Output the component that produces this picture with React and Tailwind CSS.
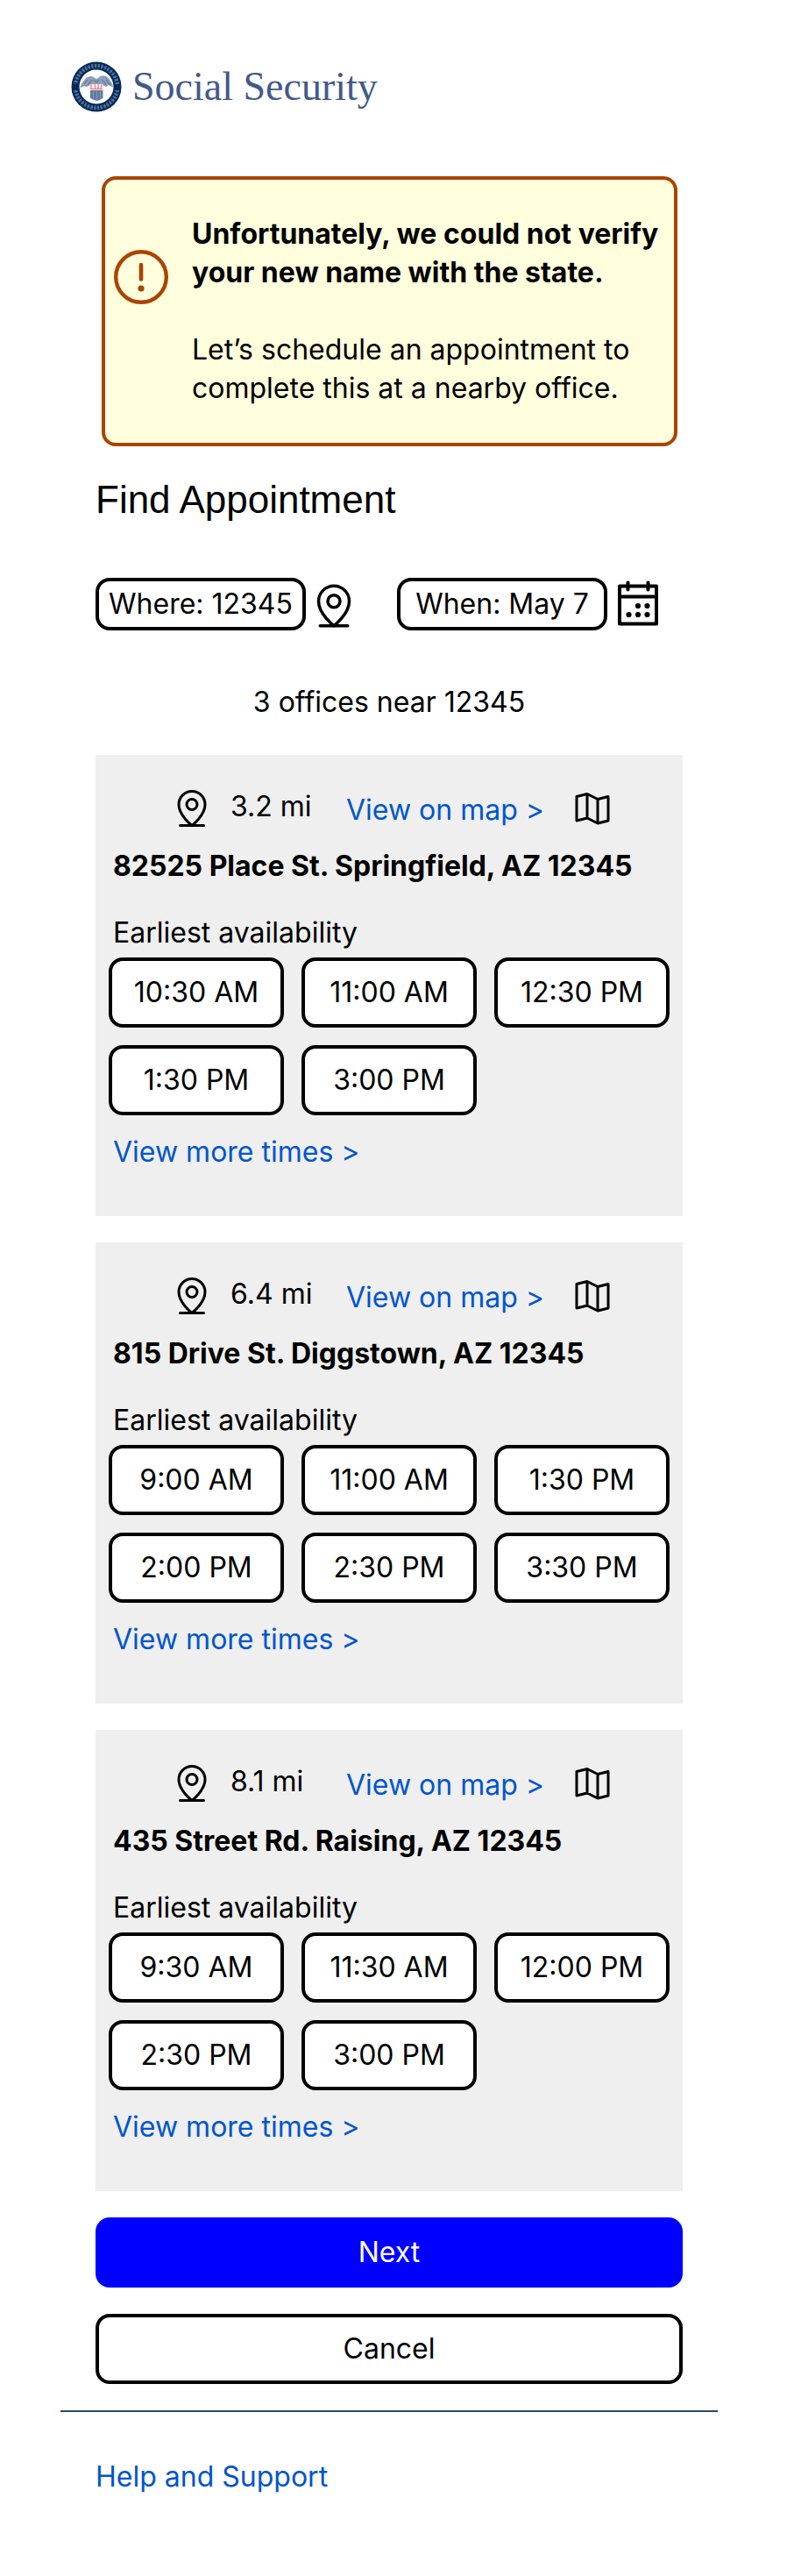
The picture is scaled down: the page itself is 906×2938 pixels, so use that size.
const offices = [
  {
    distance: "3.2 mi",
    address: "82525 Place St. Springfield, AZ 12345",
    times: ["10:30 AM", "11:00 AM", "12:30 PM", "1:30 PM", "3:00 PM"],
  },
  {
    distance: "6.4 mi",
    address: "815 Drive St. Diggstown, AZ 12345",
    times: ["9:00 AM", "11:00 AM", "1:30 PM", "2:00 PM", "2:30 PM", "3:30 PM"],
  },
  {
    distance: "8.1 mi",
    address: "435 Street Rd. Raising, AZ 12345",
    times: ["9:30 AM", "11:30 AM", "12:00 PM", "2:30 PM", "3:00 PM"],
  },
];

function Seal() {
  return (
    <svg viewBox="0 0 58 58" className="size-[58px] shrink-0" aria-hidden="true">
      <circle cx="29" cy="29" r="28.5" fill="#03295a" />
      <circle cx="29" cy="29" r="24" fill="none" stroke="#4f6f94" strokeWidth="4.5" strokeDasharray="2.4 1.4" />
      <path d="M5 26v7M53 26v7" stroke="#03295a" strokeWidth="6" />
      <circle cx="29" cy="29" r="19.5" fill="#fff" />
      <path
        d="M10.500 30.500c1-6 4-8 6-11 3-3 8-3.500 10-1l2.500 1.500 2.500-1.500c3-3 8-3 11 0 2 3 5 6 5.500 11l-5-2.500-3 2-4-2-4 1-3-2-3 2-4-1-4 2-3-1z"
        fill="#8b9fb8"
      />
      <path d="M15 26l4-5M19 27l5-6M36 21l4 6M40 21l5 6M26 21l3 3 3-3" stroke="#5f7d9f" strokeWidth="1.2" fill="none" />
      <path d="M21.500 26h15v7h-15z" fill="#fff" />
      <path d="M23 26v6M27 26l1 6M31 26v6M35 26l-1 6M22 31.500h14" stroke="#ee7a8c" strokeWidth="1.4" fill="none" />
      <path d="M22 33h14.500v9c-2 1-4 2-7 3-3-1-6-2-7.500-3z" fill="#5f7d9f" />
      <path d="M25.500 34v8M29.500 34v10M33.500 34v8" stroke="#8199b4" strokeWidth="1" />
    </svg>
  );
}

function AlertIcon() {
  return (
    <svg viewBox="0 0 62 62" className="size-[62px] shrink-0" fill="none" aria-hidden="true">
      <circle cx="31" cy="31" r="28.8" stroke="#aa4400" strokeWidth="4.4" />
      <path d="M31 17v16.5" stroke="#aa4400" strokeWidth="4.6" strokeLinecap="round" />
      <circle cx="31" cy="44" r="3.6" fill="#aa4400" />
    </svg>
  );
}

function PinIcon({ className }) {
  return (
    <svg viewBox="0 0 48 48" className={className} fill="none" stroke="#000" strokeWidth="3" strokeLinecap="round" strokeLinejoin="round" aria-hidden="true">
      <path d="M39 19.5C39 32 24 43.5 24 43.5S9 32 9 19.5a15 15 0 0 1 30 0z" />
      <circle cx="24" cy="19.5" r="6" />
      <path d="M10.500 43.500h27" />
    </svg>
  );
}

function CalendarIcon() {
  return (
    <svg viewBox="0 0 48 52" className="h-[52px] w-12 shrink-0" fill="none" stroke="#000" strokeWidth="4" strokeLinecap="round" strokeLinejoin="round" aria-hidden="true">
      <path d="M3 6.500h42v43H3zM3 18.500h42M12.500 2.500v8M35.500 2.500v8" />
      <g fill="#000" stroke="none">
        <circle cx="24" cy="29" r="3.100" />
        <circle cx="34.500" cy="29" r="3.100" />
        <circle cx="13.500" cy="39" r="3.100" />
        <circle cx="24" cy="39" r="3.100" />
        <circle cx="34.500" cy="39" r="3.100" />
      </g>
    </svg>
  );
}

function MapIcon() {
  return (
    <svg viewBox="0 0 48 48" className="size-12 shrink-0" fill="none" stroke="#000" strokeWidth="3" strokeLinejoin="round" aria-hidden="true">
      <path d="M6 10.500 18 7.500 30 13.500 42 10.500V38L30 41 18 35 6 38zM18 7.500V35M30 13.500V41" />
    </svg>
  );
}

function Office({ distance, address, times }) {
  return (
    <section className="bg-[#efefef] px-[15px] pt-[37px] pb-[51px]">
      <div className="flex items-center pl-[71px]">
        <PinIcon className="size-12 shrink-0" />
        <span className="ml-5 w-[132px] self-start">{distance}</span>
        <a href="#map" className="mt-1 whitespace-nowrap text-[#0055cc]">View on map &gt;</a>
        <span className="ml-[31px]">
          <MapIcon />
        </span>
      </div>
      <h2 className="mt-5 px-[5px] font-bold">{address}</h2>
      <p className="mt-8 px-[5px]">Earliest availability</p>
      <div className="mt-[6px] grid grid-cols-3 gap-5">
        {times.map((time) => (
          <button key={time} type="button" className="h-20 rounded-2xl border-4 border-black bg-white">
            {time}
          </button>
        ))}
      </div>
      <a href="#times" className="mt-5 block px-[5px] text-[#0055cc]">View more times &gt;</a>
    </section>
  );
}

export default function App() {
  return (
    <div className="bg-white pt-[70px] pr-[87px] pb-[79px] pl-[69px] font-['Inter',sans-serif] text-[32px] leading-[44px] text-black">
      <header className="flex items-center gap-3 pl-3">
        <Seal />
        <span className="font-['Liberation_Serif',serif] text-[46px] leading-[58px] text-[#43598a]">Social Security</span>
      </header>

      <main className="px-10">
        <div role="alert" className="mt-[73px] mr-[6px] ml-[7px] flex items-start rounded-2xl border-4 border-[#aa4400] bg-[#ffffdd] px-[10px] py-10">
          <div className="mt-10">
            <AlertIcon />
          </div>
          <div className="ml-[27px]">
            <p className="font-bold">
              Unfortunately, we could not verify
              <br />
              your new name with the state.
            </p>
            <p className="mt-11">
              Let’s schedule an appointment to
              <br />
              complete this at a nearby office.
            </p>
          </div>
        </div>

        <h1 className="mt-9 font-['Liberation_Sans',sans-serif] text-[44px] leading-[50px]">Find Appointment</h1>

        <div className="mt-16 flex items-start">
          <button type="button" className="h-[60px] w-60 rounded-2xl border-4 border-black whitespace-nowrap">Where: 12345</button>
          <PinIcon className="mt-1 ml-1 size-14 shrink-0" />
          <button type="button" className="ml-11 h-[60px] w-60 rounded-2xl border-4 border-black whitespace-nowrap">When: May 7</button>
          <span className="ml-[11px] pt-[3px]">
            <CalendarIcon />
          </span>
        </div>

        <p className="mt-[60px] text-center">3 offices near 12345</p>

        <div className="mt-[38px] flex flex-col gap-[30px]">
          {offices.map((office) => (
            <Office key={office.address} {...office} />
          ))}
          <button type="button" className="h-20 rounded-2xl bg-[#0000ff] text-white">Next</button>
          <button type="button" className="h-20 rounded-2xl border-4 border-black">Cancel</button>
        </div>
      </main>

      <footer className="mt-[30px] border-t-2 border-[#2a4a63] px-10 pt-[52px]">
        <a href="#help" className="block text-[#0055cc]">Help and Support</a>
      </footer>
    </div>
  );
}
